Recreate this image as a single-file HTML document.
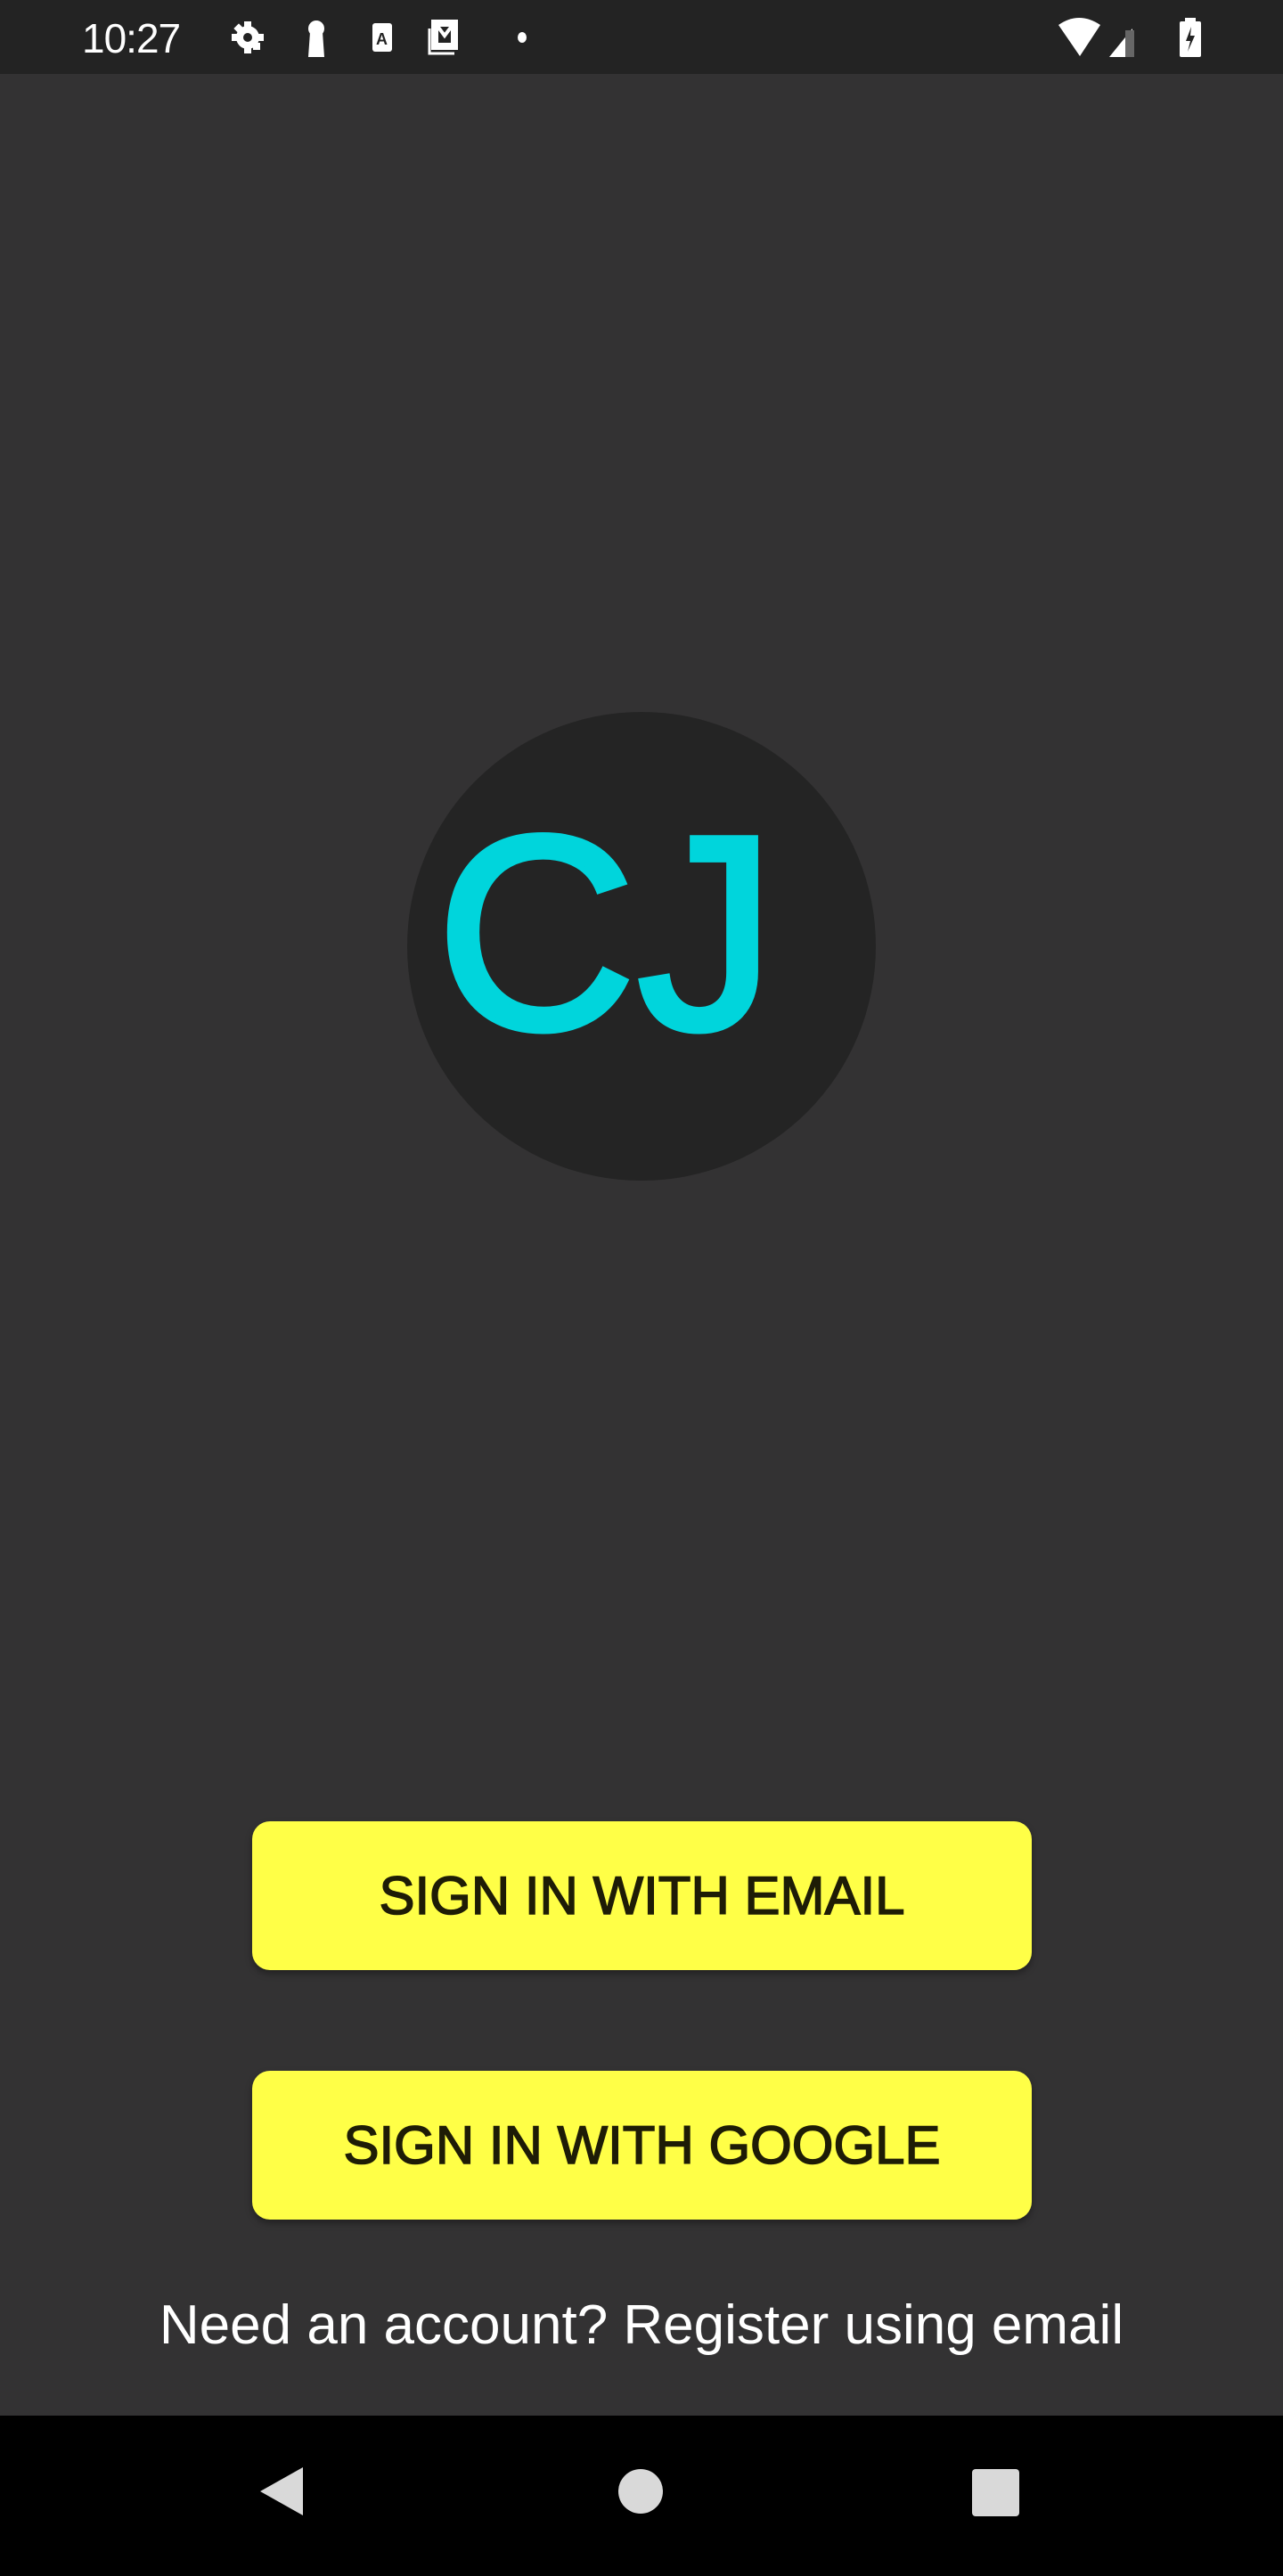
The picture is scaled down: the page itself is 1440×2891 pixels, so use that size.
<!DOCTYPE html>
<html><head><meta charset="utf-8"><style>
html,body{margin:0;padding:0;}
body{width:1440px;height:2880px;background:#333233;position:relative;overflow:hidden;font-family:"Liberation Sans",sans-serif;}
.sb{position:absolute;left:0;top:0;width:1440px;height:83px;background:#232323;}
.time{position:absolute;left:92px;top:16px;color:#fff;font-size:46px;letter-spacing:-1px;}
.circle{position:absolute;left:457px;top:799px;width:526px;height:526px;border-radius:50%;background:#242424;}
.cj{position:absolute;left:418px;top:857px;width:526px;text-align:center;color:#00d5dc;font-size:310px;line-height:380px;letter-spacing:2px;-webkit-text-stroke:7px #00d5dc;}
.btn{position:absolute;left:283px;width:875px;height:167px;background:#ffff47;border-radius:20px;box-shadow:0 4px 8px rgba(0,0,0,.35);color:#1e1c06;font-size:60px;-webkit-text-stroke:1.5px #1e1c06;text-align:center;line-height:167px;}
.reg{position:absolute;left:0;width:1440px;top:2574px;text-align:center;color:#fff;font-size:62px;}
.nav{position:absolute;left:0;top:2711px;width:1440px;height:180px;background:#000;}
</style></head><body>
<div class="sb">
<div class="time">10:27</div>
<svg style="position:absolute;left:250px;top:20px" width="360" height="48" viewBox="0 0 360 48">
<g fill="#fff">
<circle cx="28" cy="22" r="13"/><rect x="24" y="4" width="8" height="36"/><rect x="10" y="18" width="36" height="8"/>
<rect x="14" y="8" width="8" height="8" transform="rotate(45 18 12)"/><rect x="34" y="28" width="8" height="8"/>
<circle cx="28" cy="22" r="5" fill="#232323"/>
<circle cx="105" cy="12" r="9"/><path d="M98 16 L112 16 L114 44 L96 44Z"/>
<rect x="168" y="6" width="22" height="32" rx="3"/>
<text x="172" y="30" font-size="18" font-family="Liberation Sans" fill="#232323" font-weight="bold">A</text>
<path d="M236 4 h26 v30 h-26z M240 8 v22 h18 v-22z M240 8 l9 12 l9-12" fill="none" stroke="#fff" stroke-width="4"/>
<path d="M232 12 v28 h28" fill="none" stroke="#fff" stroke-width="3"/>
<ellipse cx="336" cy="22" rx="5" ry="6"/>
</g></svg>
<svg style="position:absolute;left:1185px;top:18px" width="180" height="48" viewBox="0 0 180 48">
<path d="M3 10 Q26 -6 50 10 L27 45Z" fill="#fff"/>
<path d="M60 46 L86 14 L86 46Z" fill="#fff"/>
<rect x="78" y="16" width="10" height="30" fill="#666"/>
<rect x="139" y="6" width="24" height="40" rx="2" fill="#fff"/><rect x="145" y="2" width="12" height="6" fill="#fff"/>
<path d="M152 12 L146 28 L151 28 L148 40 L156 22 L151 22Z" fill="#232323"/>
</svg>
</div>
<div class="circle"></div>
<div class="cj">CJ</div>
<div class="btn" style="top:2044px">SIGN IN WITH EMAIL</div>
<div class="btn" style="top:2324px">SIGN IN WITH GOOGLE</div>
<div class="reg">Need an account? Register using email</div>
<div class="nav">
<svg width="1440" height="169" viewBox="0 0 1440 169">
<path d="M340 58 L340 112 L292 85Z" fill="#fff" opacity=".85"/>
<circle cx="719" cy="85" r="25" fill="#fff" opacity=".85"/>
<rect x="1091" y="60" width="53" height="53" rx="4" fill="#fff" opacity=".85"/>
</svg>
</div>
</body></html>
